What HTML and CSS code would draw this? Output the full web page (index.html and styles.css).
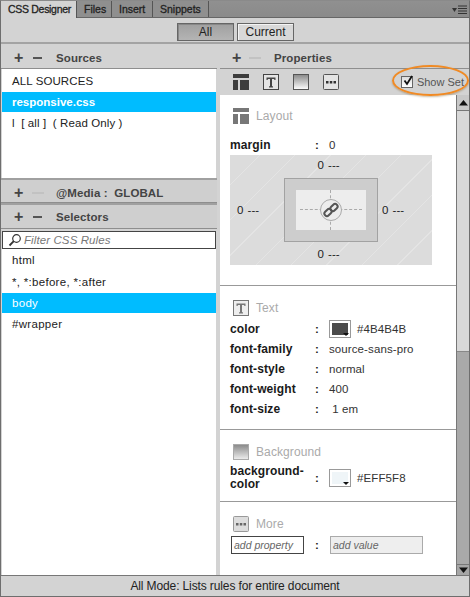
FILE: index.html
```html
<!DOCTYPE html>
<html lang="en">
<head>
<meta charset="utf-8">
<title>CSS Designer</title>
<link rel="stylesheet" href="styles.css">
</head>
<body>
<div class="panel">
  <div class="tabs">
    <div class="tab active">CSS Designer</div>
    <div class="tab">Files</div>
    <div class="tab">Insert</div>
    <div class="tab">Snippets</div>
    <svg class="menu" width="16" height="10" viewBox="0 0 16 10"><path d="M0 3h5L2.500 7z" fill="#333"/><path d="M6 1h9M6 3.500h9M6 6h9M6 8.500h9" stroke="#333" stroke-width="1"/></svg>
  </div>
  <div class="modes">
    <div class="mode on">All</div>
    <div class="mode">Current</div>
  </div>
  <div class="columns">
    <div class="left">
      <div class="head"><span class="plus">+</span><span class="minus"></span><span class="title">Sources</span></div>
      <div class="list sources">
        <div class="item">ALL SOURCES</div>
        <div class="item sel strong">responsive.css</div>
        <div class="item">l&nbsp; [ all ]&nbsp; ( Read Only )</div>
      </div>
      <div class="head rule"><span class="plus">+</span><span class="minus off"></span><span class="title">@Media :&nbsp; GLOBAL</span></div>
      <div class="head rule tall-head"><span class="plus">+</span><span class="minus"></span><span class="title">Selectors</span></div>
      <div class="filter">
        <svg width="14" height="14" viewBox="0 0 14 14"><circle cx="8.500" cy="5.500" r="3.800" fill="none" stroke="#333" stroke-width="1.200"/><path d="M5.800 8.200 1.500 12.500" stroke="#333" stroke-width="1.800"/></svg>
        <span>Filter CSS Rules</span>
      </div>
      <div class="list selectors">
        <div class="item">html</div>
        <div class="item">*, *:before, *:after</div>
        <div class="item sel">body</div>
        <div class="item">#wrapper</div>
      </div>
    </div>
    <div class="right">
      <div class="head"><span class="plus">+</span><span class="minus off"></span><span class="title">Properties</span></div>
      <div class="icons">
        <svg width="16" height="16" viewBox="0 0 16 16"><path d="M0 0h16v4H0zM0 6h5v10H0zM7 6h9v10H7z" fill="#3c3c3c"/></svg>
        <svg width="16" height="16" viewBox="0 0 16 16"><rect x=".5" y=".5" width="15" height="15" fill="#e4e4e4" stroke="#444"/><path d="M3.500 3.500h9v2.500h-1l-.5-1H9v7l1 .5v1H6v-1l1-.5V5H5l-.5 1h-1z" fill="#444"/></svg>
        <svg class="grad" width="16" height="16" viewBox="0 0 16 16"><defs><linearGradient id="fade" x1="0" y1="0" x2="0" y2="1"><stop offset="0" stop-color="#888"/><stop offset="1" stop-color="#fff"/></linearGradient></defs><rect x=".5" y=".5" width="15" height="15" fill="url(#fade)" stroke="#555"/></svg>
        <svg width="16" height="16" viewBox="0 0 16 16"><rect x=".5" y=".5" width="15" height="15" rx="1" fill="#e4e4e4" stroke="#555"/><path d="M3 7h2.500v2.500H3zM6.800 7h2.500v2.500H6.800zM10.500 7H13v2.500h-2.500z" fill="#333"/></svg>
        <label class="showset"><span class="check"><svg width="12" height="12" viewBox="0 0 12 12"><path d="M2.500 5.500 5 9l5-8" fill="none" stroke="#111" stroke-width="1.800"/></svg></span>Show Set</label>
        <div class="ring"></div>
      </div>
      <div class="scrollwrap">
        <div class="props">
          <section class="group layout">
            <h3><svg width="16" height="16" viewBox="0 0 16 16"><path d="M0 0h16v4H0zM0 6h5v10H0zM7 6h9v10H7z" fill="#777"/></svg>Layout</h3>
            <div class="row"><b>margin</b><i>:</i><span>0</span></div>
            <div class="box">
              <div class="edge tb">0 <u>---</u></div>
              <div class="mid">
                <div class="edge side-a">0 <u>---</u></div>
                <div class="outer">
                  <div class="inner">
                    <span class="dash h"></span><span class="dash v"></span>
                    <span class="link"><svg width="16" height="16" viewBox="0 0 16 16"><g fill="none" stroke="#555" stroke-width="2"><rect x="1" y="8" width="8" height="5" rx="2.500" transform="rotate(-45 5 10.500)"/><rect x="7" y="3" width="8" height="5" rx="2.500" transform="rotate(-45 11 5.500)"/></g></svg></span>
                  </div>
                </div>
                <div class="edge side-b">0 <u>---</u></div>
              </div>
              <div class="edge tb">0 <u>---</u></div>
            </div>
          </section>
          <section class="group text">
            <h3><svg width="16" height="16" viewBox="0 0 16 16"><rect x=".5" y=".5" width="15" height="15" fill="#eee" stroke="#777"/><path d="M3.500 3.500h9v2.500h-1l-.5-1H9v7l1 .5v1H6v-1l1-.5V5H5l-.5 1h-1z" fill="#777"/></svg>Text</h3>
            <div class="row"><b>color</b><i>:</i><span class="swatch dark"></span><span>#4B4B4B</span></div>
            <div class="row"><b>font-family</b><i>:</i><span>source-sans-pro</span></div>
            <div class="row"><b>font-style</b><i>:</i><span>normal</span></div>
            <div class="row"><b>font-weight</b><i>:</i><span>400</span></div>
            <div class="row"><b>font-size</b><i>:</i><span>&nbsp;1 em</span></div>
          </section>
          <section class="group back">
            <h3><svg width="16" height="16" viewBox="0 0 16 16"><defs><linearGradient id="fade2" x1="0" y1="0" x2="0" y2="1"><stop offset="0" stop-color="#888"/><stop offset="1" stop-color="#eee"/></linearGradient></defs><rect x=".5" y=".5" width="15" height="15" fill="url(#fade2)" stroke="#aaa"/></svg>Background</h3>
            <div class="row tall"><b>background-<br>color</b><i>:</i><span class="swatch light"></span><span>#EFF5F8</span></div>
          </section>
          <section class="group more">
            <h3><svg width="16" height="16" viewBox="0 0 16 16"><rect x=".5" y=".5" width="15" height="15" rx="1" fill="#ddd" stroke="#999"/><path d="M3 7h2.500v2.500H3zM6.800 7h2.500v2.500H6.800zM10.500 7H13v2.500h-2.500z" fill="#666"/></svg>More</h3>
            <div class="addrow"><span class="add prop">add property</span><i>:</i><span class="add val">add value</span></div>
          </section>
        </div>
        <div class="scrollbar">
          <div class="arrow"><svg width="9" height="6" viewBox="0 0 9 6"><path d="M0 5.500h9L4.500 0z" fill="#111"/></svg></div>
          <div class="thumb"></div>
          <div class="track"></div>
          <div class="arrow low"><svg width="9" height="6" viewBox="0 0 9 6"><path d="M0 .5h9L4.500 6z" fill="#111"/></svg></div>
        </div>
      </div>
    </div>
  </div>
  <div class="status">All Mode: Lists rules for entire document</div>
</div>
</body>
</html>
```
FILE: styles.css
```css
* { box-sizing: border-box; }
html, body { margin: 0; padding: 0; }
body { font-family: "Liberation Sans", Arial, sans-serif; font-size: 11.500px; color: #222; }
.panel { width: 470px; height: 597px; display: flex; flex-direction: column; background: #d3d3d3; border: 1px solid #6e6e6e; border-top-color: #8a8a8a; overflow: hidden; }
.tabs { height: 17px; flex: none; display: flex; background: linear-gradient(#909090, #8a8a8a); border-bottom: 1px solid #666; position: relative; font-size: 10.500px; -webkit-text-stroke: .3px #222; white-space: nowrap; }
.tab { padding: 2px 7px 0; color: #222; border-right: 1px solid #555; background: #8f8f8f; width: 35px; }
.tab:nth-child(3) { width: 41px; }
.tab:nth-child(4) { width: 56px; }
.tab.active { background: #d3d3d3; height: 17px; width: 76px; padding-left: 7px; letter-spacing: -.3px; z-index: 1; }
.menu { position: absolute; right: 1px; top: 4px; }
.modes { height: 26px; flex: none; display: flex; justify-content: center; padding: 5px 0 0 1px; gap: 3px; border-bottom: 2px solid #a3a3a3; font-size: 12px; }
.mode { width: 57px; height: 18px; border: 1px solid #666; background: #d8d8d8; text-align: center; line-height: 16px; box-shadow: inset 1px 1px 0 #f4f4f4; }
.mode.on { background: linear-gradient(#a0a0a0, #b4b4b4); box-shadow: inset 1px 1px 0 #888; }
.columns { flex: 1; min-height: 0; display: flex; }
.left { width: 216px; flex: none; display: flex; flex-direction: column; }
.right { flex: 1; min-width: 0; margin-left: 3px; display: flex; flex-direction: column; background: #d3d3d3; }
.head { height: 25px; flex: none; display: flex; align-items: center; padding: 3px 0 0 13px; border-bottom: 1px solid #8e8e8e; font-weight: bold; color: #444; }
.right .head { padding-left: 12px; }
.head.rule { border-top: 2px solid #a0a0a0; background: #cfcfcf; padding-top: 4px; }
.head.tall-head { height: 26px; padding-top: 0; }
.plus { width: 9px; font-size: 16px; line-height: 14px; color: #444; text-align: center; font-weight: bold; }
.minus { width: 9px; height: 2px; background: #555; margin-left: 10px; }
.minus.off { background: #c2c2c2; width: 12px; margin-left: 9px; }
.title { margin-left: 14px; letter-spacing: .1px; }
.minus.off + .title { margin-left: 12px; }
.right .minus.off { margin-left: 8px; }
.right .minus.off + .title { margin-left: 13px; }
.list { background: #fff; margin: 0 1px; }
.sources { height: 109px; flex: none; }
.selectors { flex: 1; }
.item { height: 21px; line-height: 23px; padding-left: 10px; letter-spacing: .1px; color: #222; background: #fff; }
.selectors .item { letter-spacing: .3px; height: 22px; line-height: 23px; }
.item.sel, .selectors .item.sel { background: #00bcff; color: #fff; height: 20px; line-height: 20px; }
.item.strong { font-weight: bold; letter-spacing: 0; }
.sources .item:first-child { height: 23px; line-height: 25px; }
.filter { height: 18px; flex: none; margin: 2px 1px 0; display: flex; align-items: center; gap: 2px; padding-left: 5px; background: #fff; border: 1px solid #444; color: #777; font-style: italic; letter-spacing: .1px; }
.icons { height: 26px; flex: none; display: flex; align-items: center; gap: 14px; padding-left: 13px; position: relative; }
.showset { margin-left: auto; margin-right: 5px; display: flex; align-items: center; gap: 4px; color: #555; font-size: 11px; }
.check { width: 12px; height: 12px; border: 1px solid #666; background: linear-gradient(#ddd, #fff); display: block; }
.check svg { display: block; margin: -2px 0 0 0; }
.ring { position: absolute; right: 0; top: -4px; width: 77px; height: 31px; border: 2px solid #f08a24; border-radius: 50%; box-shadow: 0 1px 2px rgba(120,80,20,.4); }
.scrollwrap { flex: 1; min-height: 0; display: flex; background: #fff; }
.props { flex: 1; min-width: 0; background: #fff; }
.scrollbar { width: 13px; flex: none; display: flex; flex-direction: column; border-left: 1px solid #777; background: #aaa; }
.arrow { height: 16px; flex: none; background: #c8c8c8; display: flex; align-items: center; justify-content: center; border-bottom: 1px solid #777; }
.arrow.low { height: 11px; border-bottom: 0; border-top: 1px solid #777; background: #a6a6a6; }
.thumb { height: 241px; flex: none; background: #d8d8d8; border-bottom: 1px solid #888; }
.track { flex: 1; background: #a9a9a9; }
.group { border-bottom: 1px solid #999; padding-left: 10px; }
.group h3 { margin: 0; display: flex; align-items: center; gap: 7px; font-size: 12px; letter-spacing: .1px; font-weight: normal; color: #aaa; padding-left: 3px; }
.layout { height: 191px; padding-top: 13px; }
.text { height: 144px; padding-top: 14px; }
.back { height: 72px; padding-top: 14px; }
.more { border-bottom: 0; padding-top: 14px; }
.row { height: 20px; display: flex; align-items: center; }
.row b { width: 85px; flex: none; color: #1a1a1a; font-size: 12px; line-height: 13px; letter-spacing: .1px; }
.row i { width: 14px; flex: none; font-style: normal; font-weight: bold; }
.row span { color: #333; letter-spacing: .1px; }
.layout .row { margin-top: 13px; height: 16px; }
.text h3 { margin-bottom: 3px; }
.box { width: 202px; height: 110px; margin-top: 2px; background-color: #dcdcdc; background-image: repeating-linear-gradient(-45deg, transparent 0 24px, #e4e4e4 24px 25px); display: flex; flex-direction: column; align-items: center; justify-content: space-between; padding: 2px 0 3px; }
.edge { color: #222; height: 16px; line-height: 16px; white-space: nowrap; }
.edge u { text-decoration: none; margin-left: 1px; }
.tb { padding-right: 5px; }
.mid { width: 100%; display: grid; grid-template-columns: 54px 94px 54px; align-items: center; }
.side-a { padding-left: 7px; }
.side-b { padding-left: 4px; }
.outer { width: 94px; height: 64px; background: #cdcdcd; border: 1px solid #a2a2a2; padding: 11px; }
.inner { width: 70px; height: 40px; background: #ededed; position: relative; }
.dash { position: absolute; display: block; }
.dash.h { left: 4px; right: 4px; top: 19px; border-top: 1px dashed #aaa; }
.dash.v { top: 0; bottom: 0; left: 34px; border-left: 1px dashed #aaa; }
.link { position: absolute; left: 24px; top: 9px; width: 22px; height: 22px; border-radius: 50%; background: #ededed; border: 1px solid #aaa; display: flex; align-items: center; justify-content: center; }
.swatch { width: 22px; height: 18px; border: 1px solid #999; margin-right: 6px; position: relative; background: #fff; flex: none; }
.swatch::before { content: ""; position: absolute; left: 2px; top: 2px; right: 2px; bottom: 2px; }
.swatch::after { content: ""; position: absolute; right: 1px; bottom: 1px; border: 3px solid transparent; border-top-color: #111; border-bottom: 0; }
.swatch.dark::before { background: #4b4b4b; }
.swatch.light::before { background: #eff5f8; }
.tall { height: 30px; margin-top: 3px; }
.addrow { display: flex; align-items: center; margin-top: 4px; }
.addrow i { width: 26px; text-align: center; font-style: normal; font-weight: bold; }
.add { height: 18px; line-height: 16px; padding-left: 2px; font-size: 10.500px; font-style: italic; color: #666; border: 1px solid #444; background: #fff; }
.add.prop { width: 73px; margin-left: 1px; }
.add.val { width: 93px; background: #eee; border-color: #aaa; }
.status { height: 21px; flex: none; border-top: 1px solid #777; text-align: center; line-height: 20px; color: #222; font-size: 12px; letter-spacing: -.12px; }
```
